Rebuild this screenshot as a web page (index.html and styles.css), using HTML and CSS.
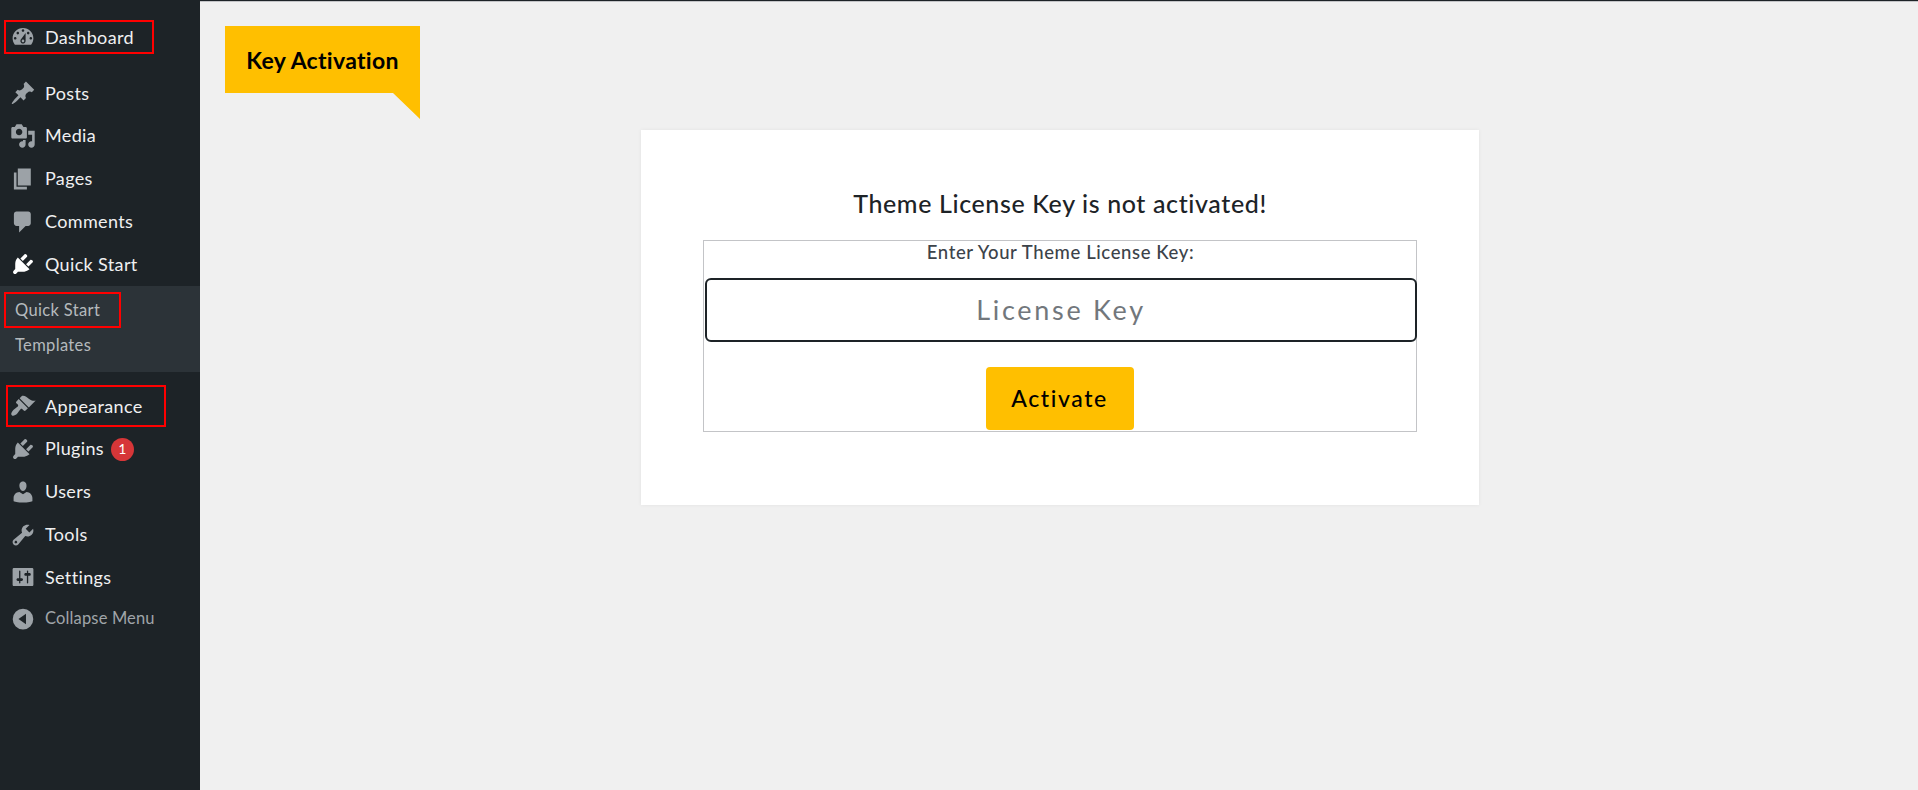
FILE: index.html
```html
<!DOCTYPE html>
<html lang="en">
<head>
    <meta charset="UTF-8">
    <meta name="viewport" content="width=device-width, initial-scale=1.0">
    <title>Key Activation</title>
    <link rel="stylesheet" href="styles.css">
</head>
<body>
    <div class="wrapper">
        <nav class="sidebar">
            <ul class="menu">
                <li class="menu-item dashboard">
                    <svg class="icon" viewBox="0 0 20 20"><path d="M3.76 16h12.48c1.1-1.37 1.76-3.11 1.76-5 0-4.42-3.58-8-8-8s-8 3.58-8 8c0 1.89.66 3.63 1.76 5zM10 4c.55 0 1 .45 1 1s-.45 1-1 1-1-.45-1-1 .45-1 1-1zM6 6c.55 0 1 .45 1 1s-.45 1-1 1-1-.45-1-1 .45-1 1-1zm8 0c.55 0 1 .45 1 1s-.45 1-1 1-1-.45-1-1 .45-1 1-1zm-5.37 5.55L12 7v6c0 1.1-.9 2-2 2s-2-.9-2-2c0-.57.24-1.08.63-1.45zM4 10c.55 0 1 .45 1 1s-.45 1-1 1-1-.45-1-1 .45-1 1-1zm12 0c.55 0 1 .45 1 1s-.45 1-1 1-1-.45-1-1 .45-1 1-1zm-5 3c0-.55-.45-1-1-1s-1 .45-1 1 .45 1 1 1 1-.45 1-1z"/></svg>
                    <span>Dashboard</span>
                </li>
                <li class="menu-item">
                    <svg class="icon" viewBox="0 0 20 20"><path d="M10.44 3.02l1.82-1.82 6.36 6.35-1.83 1.82c-1.05-.68-2.48-.57-3.41.36l-.75.75c-.92.93-1.04 2.35-.35 3.41l-1.83 1.82-2.41-2.41-2.8 2.79c-.42.42-3.38 2.71-3.8 2.29s1.86-3.39 2.28-3.81l2.79-2.79L4.1 9.36l1.83-1.82c1.05.69 2.48.57 3.4-.36l.75-.75c.93-.92 1.05-2.35.36-3.41z"/></svg>
                    <span>Posts</span>
                </li>
                <li class="menu-item">
                    <svg class="icon" viewBox="0 0 20 20"><path d="M13 11V4c0-.55-.45-1-1-1h-1.67L9 1H5L3.67 3H2c-.55 0-1 .45-1 1v7c0 .55.45 1 1 1h10c.55 0 1-.45 1-1zM7 4.5c1.38 0 2.5 1.12 2.5 2.5S8.38 9.5 7 9.5 4.5 8.38 4.5 7 5.62 4.5 7 4.5zM14 6h5v10.5c0 1.38-1.12 2.5-2.5 2.5S14 17.88 14 16.5s1.12-2.5 2.5-2.5c.17 0 .34.02.5.05V9h-3V6zm-4 8.05V13h2v3.5c0 1.38-1.12 2.5-2.5 2.5S7 17.88 7 16.5 8.12 14 9.5 14c.17 0 .34.02.5.05z"/></svg>
                    <span>Media</span>
                </li>
                <li class="menu-item">
                    <svg class="icon" viewBox="0 0 20 20"><path d="M6 15V2h10v13H6zm-1 1h8v2H3V5h2v11z"/></svg>
                    <span>Pages</span>
                </li>
                <li class="menu-item">
                    <svg class="icon" viewBox="0 0 20 20"><path d="M5 2h9c1.1 0 2 .9 2 2v7c0 1.1-.9 2-2 2h-2l-5 5v-5H5c-1.1 0-2-.9-2-2V4c0-1.1.9-2 2-2z"/></svg>
                    <span>Comments</span>
                </li>
                <li class="menu-item open">
                    <svg class="icon" viewBox="0 0 20 20"><path d="M13.11 4.36L9.87 7.6 8 5.73l3.24-3.24c.35-.34 1.05-.2 1.56.32.52.51.66 1.21.31 1.55zm-8 1.77l.91-1.12 9.01 9.01-1.19.84c-.71.71-2.63 1.16-3.82 1.16H6.14L4.9 17.26c-.59.59-1.54.59-2.12 0-.59-.58-.59-1.53 0-2.12l1.24-1.24v-3.88c0-1.13.4-3.19 1.09-3.89zm7.26 3.97l3.24-3.24c.34-.35 1.04-.21 1.55.31.52.51.66 1.21.31 1.55l-3.24 3.25z"/></svg>
                    <span>Quick Start</span>
                </li>
            </ul>
            <ul class="submenu">
                <li>Quick Start</li>
                <li>Templates</li>
            </ul>
            <ul class="menu">
                <li class="menu-item">
                    <svg class="icon" viewBox="0 0 20 20"><path d="M14.48 11.06L7.41 3.99l1.5-1.5c.5-.56 2.3-.47 3.51.32 1.21.8 1.43 1.28 2.91 2.1 1.18.64 2.45 1.26 4.45.85zm-.71.71L6.7 4.7 4.93 6.47c-.39.39-.39 1.02 0 1.41l1.06 1.06c.39.39.39 1.03 0 1.42-.6.6-1.43 1.11-2.21 1.69-.35.26-.7.53-1.01.84C1.43 14.23.4 16.08 1.4 17.07c.99 1 2.84-.03 4.18-1.36.31-.31.58-.66.85-1.02.57-.78 1.08-1.61 1.69-2.21.39-.39 1.02-.39 1.41 0l1.06 1.06c.39.39 1.02.39 1.41 0z"/></svg>
                    <span>Appearance</span>
                </li>
                <li class="menu-item">
                    <svg class="icon" viewBox="0 0 20 20"><path d="M13.11 4.36L9.87 7.6 8 5.73l3.24-3.24c.35-.34 1.05-.2 1.56.32.52.51.66 1.21.31 1.55zm-8 1.77l.91-1.12 9.01 9.01-1.19.84c-.71.71-2.63 1.16-3.82 1.16H6.14L4.9 17.26c-.59.59-1.54.59-2.12 0-.59-.58-.59-1.53 0-2.12l1.24-1.24v-3.88c0-1.13.4-3.19 1.09-3.89zm7.26 3.97l3.24-3.24c.34-.35 1.04-.21 1.55.31.52.51.66 1.21.31 1.55l-3.24 3.25z"/></svg>
                    <span>Plugins</span>
                    <b class="count">1</b>
                </li>
                <li class="menu-item">
                    <svg class="icon" viewBox="0 0 20 20"><path d="M10 9.25c-2.27 0-2.73-3.44-2.73-3.44C7 4.02 7.82 2 9.97 2c2.16 0 2.98 2.02 2.71 3.81 0 0-.41 3.44-2.68 3.44zm0 2.57L12.72 10c2.39 0 4.52 2.33 4.52 4.53v2.49s-3.65 1.13-7.24 1.13c-3.65 0-7.24-1.13-7.24-1.13v-2.49c0-2.25 1.94-4.48 4.47-4.48z"/></svg>
                    <span>Users</span>
                </li>
                <li class="menu-item">
                    <svg class="icon" viewBox="0 0 20 20"><path d="M16.68 9.77c-1.34 1.34-3.3 1.67-4.95.99l-5.41 6.52c-.99.99-2.59.99-3.58 0s-.99-2.59 0-3.57l6.52-5.42c-.68-1.65-.35-3.61.99-4.95 1.28-1.28 3.12-1.62 4.72-1.06l-2.89 2.89 2.82 2.82 2.86-2.87c.53 1.58.18 3.39-1.08 4.65zM3.81 16.21c.4.39 1.04.39 1.43 0 .4-.4.4-1.04 0-1.43-.39-.4-1.03-.4-1.43 0-.39.39-.39 1.03 0 1.43z"/></svg>
                    <span>Tools</span>
                </li>
                <li class="menu-item">
                    <svg class="icon" viewBox="0 0 20 20"><path d="M18 16V4c0-.55-.45-1-1-1H3c-.55 0-1 .45-1 1v12c0 .55.45 1 1 1h14c.55 0 1-.45 1-1zM8 11h1c.55 0 1 .45 1 1s-.45 1-1 1H8v1.5c0 .28-.22.5-.5.5s-.5-.22-.5-.5V13H6c-.55 0-1-.45-1-1s.45-1 1-1h1V5.5c0-.28.22-.5.5-.5s.5.22.5.5V11zm5-2h-1c-.55 0-1-.45-1-1s.45-1 1-1h1V5.5c0-.28.22-.5.5-.5s.5.22.5.5V7h1c.55 0 1 .45 1 1s-.45 1-1 1h-1v5.5c0 .28-.22.5-.5.5s-.5-.22-.5-.5V9z"/></svg>
                    <span>Settings</span>
                </li>
                <li class="menu-item collapse">
                    <svg class="icon" viewBox="0 0 20 20"><path fill-rule="evenodd" d="M10 2.2a7.9 7.9 0 1 0 0 15.8 7.9 7.9 0 0 0 0-15.8zM12.3 6v8L6.5 10z"/></svg>
                    <span>Collapse Menu</span>
                </li>
            </ul>
            <div class="mark mark-dashboard"></div>
            <div class="mark mark-quick"></div>
            <div class="mark mark-appearance"></div>
        </nav>
        <main class="content">
            <h1 class="banner">Key Activation</h1>
            <section class="card">
                <h2>Theme License Key is not activated!</h2>
                <form class="license-form">
                    <label for="licenseKey">Enter Your Theme License Key:</label>
                    <input type="text" id="licenseKey" placeholder="License Key">
                    <button type="button">Activate</button>
                </form>
            </section>
        </main>
    </div>
</body>
</html>
```
FILE: styles.css
```css
* {
    box-sizing: border-box;
}

body {
    margin: 0;
    font-family: Lato, 'Open Sans', sans-serif;
    font-variant-ligatures: none;
    background-color: #f0f0f0;
}

.wrapper {
    display: flex;
    min-height: 100vh;
    border-top: 1px solid #1d2327;
}

.sidebar {
    position: relative;
    width: 200px;
    padding-top: 15px;
    background-color: #1d2327;
    color: #f0f0f1;
}

.menu,
.submenu {
    list-style: none;
    margin: 0;
    padding: 0;
}

.menu-item {
    display: flex;
    align-items: center;
    height: 42.8px;
    padding-left: 9.5px;
    font-size: 18px;
    letter-spacing: 0.35px;
}

.menu-item span {
    padding-bottom: 1px;
}

.icon {
    width: 26px;
    height: 26px;
    margin-right: 9.5px;
    fill: #9ca2a7;
}

.dashboard {
    margin-bottom: 13px;
}

.open .icon {
    fill: #ffffff;
}

.submenu {
    height: 86px;
    margin-bottom: 13px;
    padding: 7px 0 0 15px;
    background-color: #2c3338;
    color: #b5babd;
    font-size: 16.5px;
    letter-spacing: 0.35px;
    line-height: 35px;
}

.count {
    width: 23px;
    height: 23px;
    margin: 2px 0 0 7px;
    border-radius: 50%;
    background-color: #d63638;
    color: #ffffff;
    font-size: 14px;
    font-weight: normal;
    line-height: 22px;
    text-align: center;
}

.collapse {
    height: 40px;
    color: #a0a5a9;
    font-size: 16.5px;
    letter-spacing: 0.15px;
}

/* red frames around the highlighted menu entries */
.mark {
    position: absolute;
    border: 2px solid #ff0000;
}

.mark-dashboard {
    top: 19px;
    left: 4px;
    width: 150px;
    height: 34px;
}

.mark-quick {
    top: 291px;
    left: 4px;
    width: 117px;
    height: 36px;
}

.mark-appearance {
    top: 384px;
    left: 6px;
    width: 160px;
    height: 42px;
}

.content {
    flex: 1;
    padding: 24px 0 0 25px;
    border-top: 1px solid #c3c4c7;
}

.banner {
    width: 195px;
    height: 93px;
    margin: 0 0 11px;
    background-color: #ffbf00;
    clip-path: polygon(0 0, 100% 0, 100% 100%, 168px 67px, 0 67px);
    color: #000000;
    font-size: 23px;
    letter-spacing: 0.3px;
    line-height: 68px;
    text-align: center;
}

.card {
    width: 838px;
    height: 375px;
    margin-left: 416px;
    padding: 55px 62px 0;
    background-color: #ffffff;
    box-shadow: 0 0 4px rgba(0, 0, 0, 0.06);
    text-align: center;
}

.card h2 {
    margin: 0 0 19px;
    color: #1d2327;
    font-size: 25px;
    font-weight: 500;
    letter-spacing: 0.62px;
    line-height: 36px;
}

.license-form {
    height: 192px;
    padding-left: 1px;
    border: 1px solid #c3c4c7;
}

.license-form label {
    display: block;
    height: 37px;
    color: #3c434a;
    font-size: 18.5px;
    font-weight: 500;
    letter-spacing: 0.6px;
    line-height: 23px;
}

.license-form input {
    display: block;
    width: 712px;
    height: 64px;
    padding: 0 2px 2px;
    border: 2px solid #1d2327;
    border-radius: 6px;
    font-family: inherit;
    font-size: 27px;
    letter-spacing: 2.7px;
    text-align: center;
}

.license-form input::placeholder {
    color: #72777c;
}

.license-form button {
    width: 148px;
    height: 63px;
    margin: 25px 2px 0 0;
    padding: 0 0 2px;
    border: 0;
    border-radius: 4px;
    background-color: #ffbf00;
    color: #000000;
    font-family: inherit;
    font-size: 23px;
    font-weight: 500;
    letter-spacing: 1.6px;
}
```
